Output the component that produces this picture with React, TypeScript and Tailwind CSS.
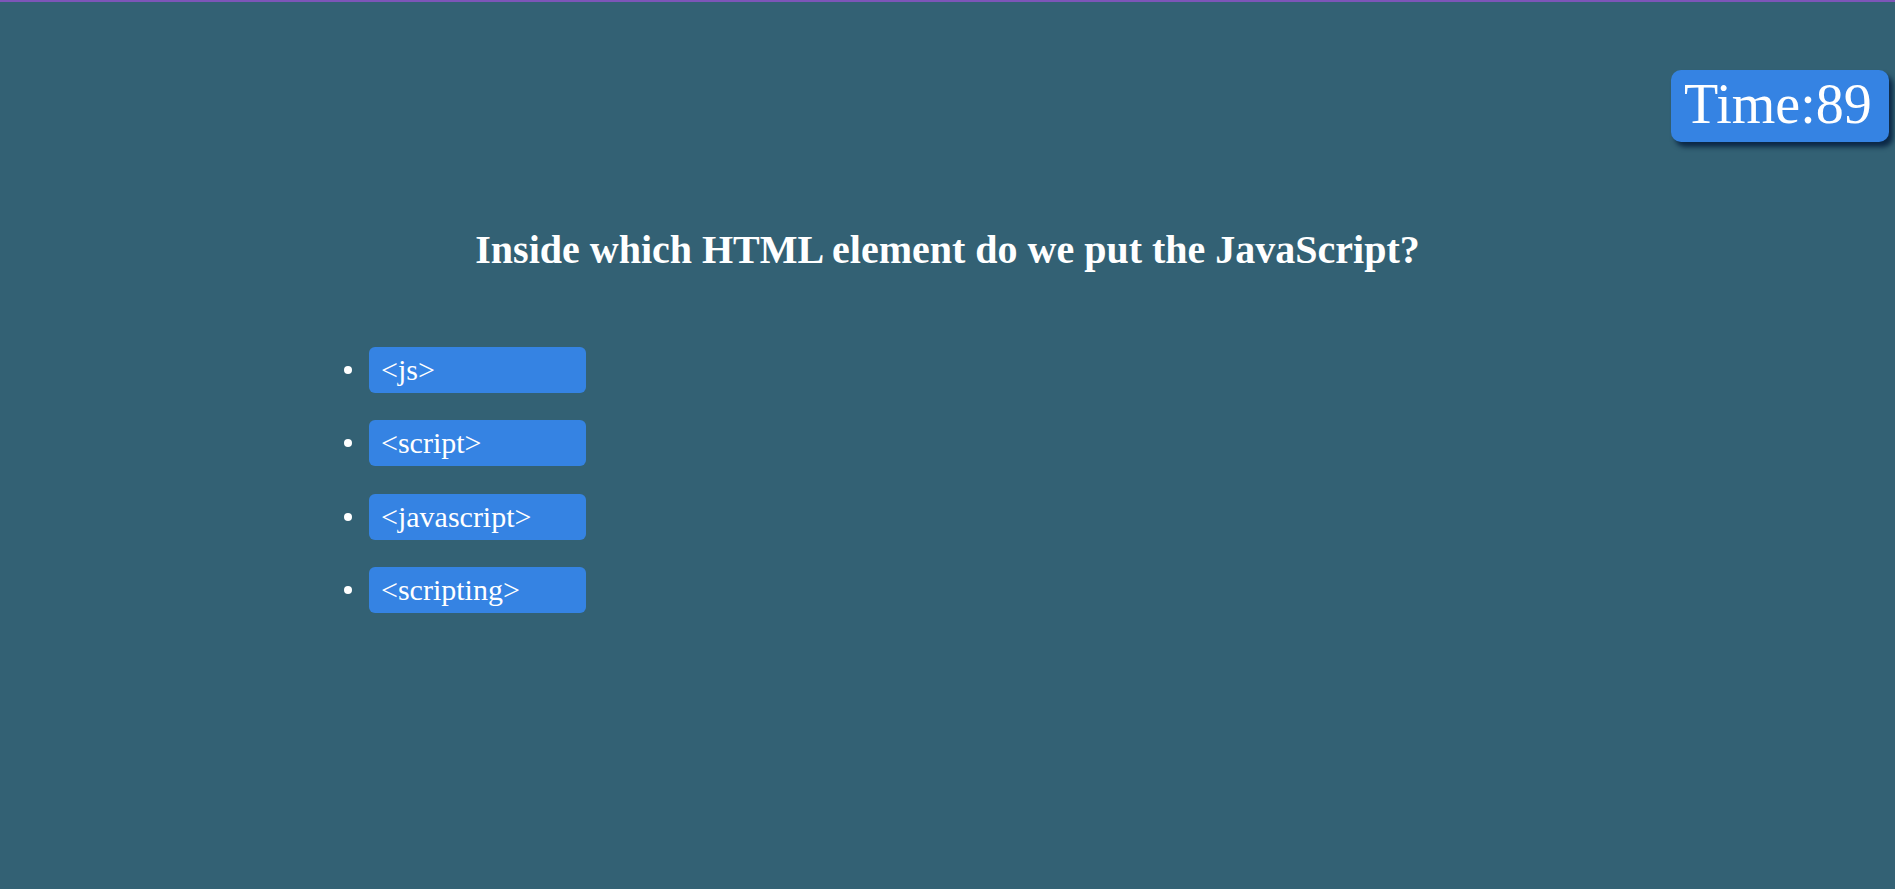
import React from "react";

const options = ["<js>", "<script>", "<javascript>", "<scripting>"];

export default function App() {
  return (
    <div className="min-h-screen bg-[#336174] text-white font-['Liberation_Serif','Times_New_Roman',serif]">
      <div className="h-[2px] bg-[#7d55b8]" />
      <div className="flex justify-end pr-[6px] pt-[68px]">
        <div className="w-[218px] h-[72px] rounded-[10px] bg-[#3583e3] pl-[13px] pt-[3px] text-[56px] leading-[62px] shadow-[4px_5px_5px_#0b2846] whitespace-nowrap">
          Time:89
        </div>
      </div>
      <h1 className="mt-[85px] text-center text-[40px] font-bold leading-[46px]">
        Inside which HTML element do we put the JavaScript?
      </h1>
      <ul className="mt-[74px] pl-[344px] flex flex-col gap-[27.3px]">
        {options.map((o) => (
          <li key={o} className="flex items-center gap-[17px]">
            <span className="w-[8px] h-[8px] rounded-full bg-white" />
            <span className="w-[217px] h-[46px] rounded-[6px] bg-[#3583e3] pl-[12px] flex items-center text-[30px] leading-[34px]">
              {o}
            </span>
          </li>
        ))}
      </ul>
    </div>
  );
}
